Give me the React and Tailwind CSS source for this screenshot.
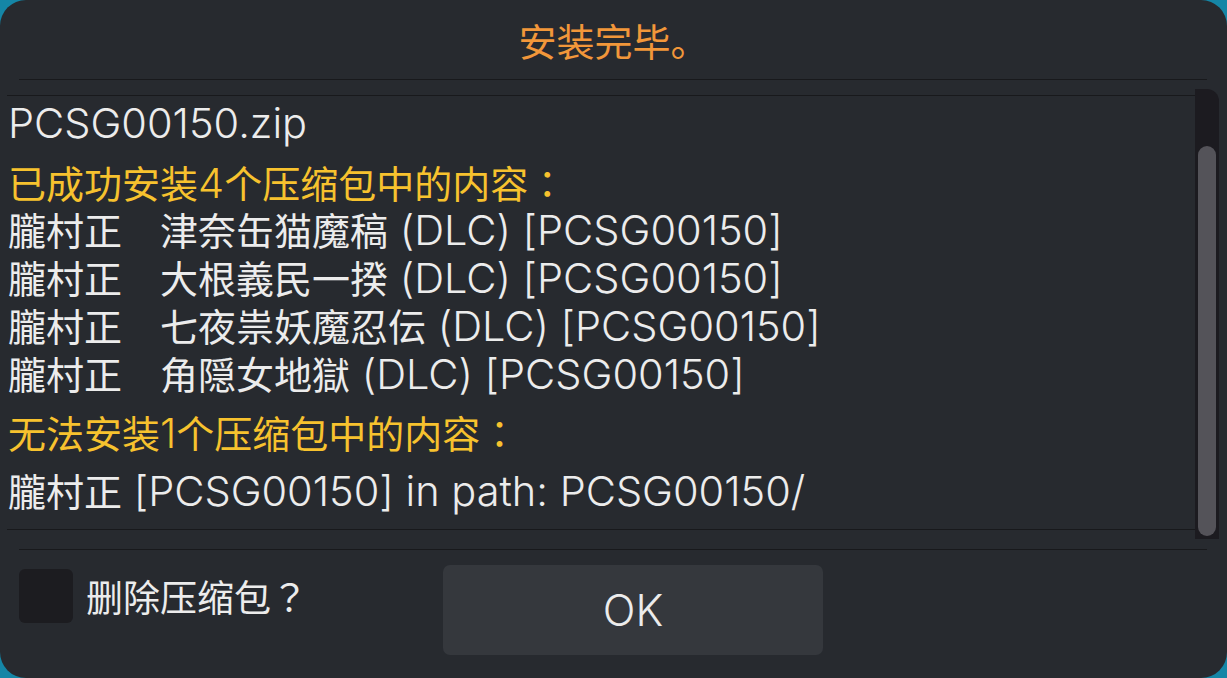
const FONT = { fontFamily: '"Inter", "Noto Sans CJK SC", sans-serif' };
const CJK = { fontFamily: '"Noto Sans CJK SC", sans-serif' };
const PUNCT = { fontFamily: '"Noto Sans CJK TC", "Noto Sans CJK JP", sans-serif' };

const installed = [
  '津奈缶猫魔稿',
  '大根義民一揆',
  '七夜祟妖魔忍伝',
  '角隠女地獄',
];

function Line({ children, className = '' }) {
  return <div className={`h-[48px] leading-[48px] whitespace-nowrap ${className}`}>{children}</div>;
}

// Latin runs are drawn a bit larger than the CJK ones, as in the emulator font
function L({ children }) {
  return <span className="text-[41.5px] font-light">{children}</span>;
}

function C({ children }) {
  return <span style={CJK} className="font-normal">{children}</span>;
}

// full-width punctuation, centred in its em box
function P({ children }) {
  return <span style={PUNCT} className="inline-block w-[1em] text-center">{children}</span>;
}

export default function App() {
  return (
    <div className="w-[1227px] h-[678px] bg-[#1586a6] overflow-hidden" style={FONT}>
      <div className="w-full h-full rounded-[26px] bg-[#272a2f] flex flex-col text-[38px] text-[#ececec]">
        {/* title */}
        <div className="h-[79px] flex items-center justify-center text-[#f2973a] pb-[1px]">
          <C>安装完毕。</C>
        </div>
        <div className="h-px bg-[#18191c] ml-[19px] mr-[20px]" />

        {/* scrolling child */}
        <div className="mt-[9px] h-[450px] ml-[7px] mr-[8px] flex">
          <div className="flex-1 flex flex-col">
            <div className="h-[6px]" />
            <div className="h-px bg-[#18191c]" />
            <div className="flex-1 pl-[1px] pt-[3px]">
              <Line><L>PCSG00150.zip</L></Line>
              <Line className="mt-[12px] text-[#f7c22e] !h-[46px] !leading-[46px]">
                <C>已成功安装</C><L>4</L><C>个压缩包中的内容</C><P>：</P>
              </Line>
              {installed.map((t) => (
                <Line key={t}>
                  <C>朧村正　{t}</C><L> (DLC) [PCSG00150]</L>
                </Line>
              ))}
              <Line className="mt-[11px] text-[#f7c22e]">
                <C>无法安装</C><L>1</L><C>个压缩包中的内容</C><P>：</P>
              </Line>
              <Line className="mt-[10px]">
                <C>朧村正</C><L> [PCSG00150] in path: PCSG00150/</L>
              </Line>
            </div>
            <div className="h-px bg-[#18191c]" />
            <div className="h-[9px]" />
          </div>
          <div className="w-[24px] bg-[#1c1b20] rounded-tr-[12px] flex flex-col px-[3px] pb-[3px]">
            <div className="h-[57px]" />
            <div className="flex-1 rounded-full bg-[#545359]" />
          </div>
        </div>

        <div className="mt-[10px] h-px bg-[#18191c] ml-[19px] mr-[20px]" />

        {/* footer */}
        <div className="flex items-start pl-[19px] pt-[15px]">
          <div className="mt-[4px] w-[54px] h-[54px] rounded-[6px] bg-[#1c1c20]" />
          <div className="ml-[13px] mt-[4px] w-[357px] h-[54px] leading-[54px] text-[37px] whitespace-nowrap">
            <C>删除压缩包</C><P>？</P>
          </div>
          <button className="w-[380px] h-[90px] rounded-[7px] bg-[#35383d] text-[#ececec]">
            <span className="text-[43px] font-light">OK</span>
          </button>
        </div>
      </div>
    </div>
  );
}
